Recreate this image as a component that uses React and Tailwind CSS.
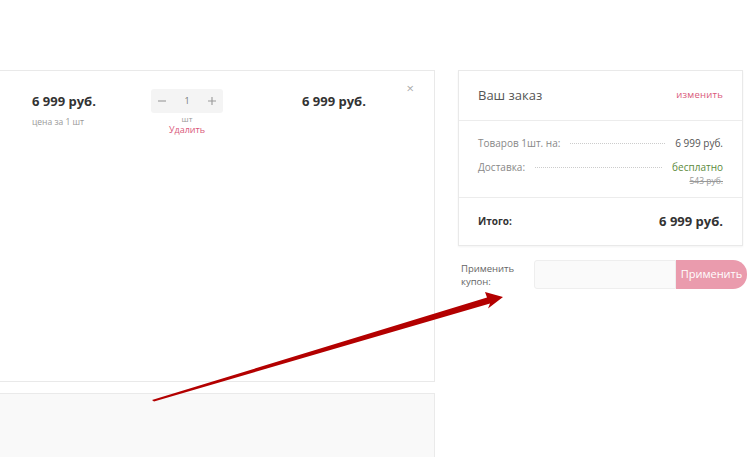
import React from "react";

export default function App() {
  return (
    <div
      className="relative w-[752px] h-[457px] overflow-hidden bg-white"
      style={{ fontFamily: '"Open Sans", "Liberation Sans", sans-serif' }}
    >
      <div className="flex pt-[70px]">
        {/* left column */}
        <div className="w-[440px] ml-[-5px] flex flex-col gap-[11px]">
          <div className="h-[312px] border border-[#e9e9e9] bg-white">
            <div className="flex pt-[18px] pl-[36px] pr-[18px]">
              <div className="w-[119px] pt-[4px]">
                <div className="text-[13px] font-bold text-[#333] leading-[16px]">6 999 руб.</div>
                <div className="text-[8.5px] text-[#999] leading-[12px] mt-[7px]">цена за 1 шт</div>
              </div>
              <div className="w-[150px] flex flex-col">
                <div className="w-[72px] h-[24px] bg-[#f4f4f4] rounded-[3px] flex items-center justify-between px-[6px] text-[#888]">
                  <svg width="10" height="10" viewBox="0 0 10 10"><path d="M1 5h8" stroke="#999" strokeWidth="1.1" /></svg>
                  <span className="text-[9px] text-[#777]">1</span>
                  <svg width="10" height="10" viewBox="0 0 10 10"><path d="M1 5h8M5 1v8" stroke="#999" strokeWidth="1.1" /></svg>
                </div>
                <div className="w-[72px] text-center text-[8px] text-[#999] leading-[10px] mt-[1px]">шт</div>
                <div className="w-[72px] text-center text-[9px] text-[#d9587a] leading-[11px]">Удалить</div>
              </div>
              <div className="pl-[1px] pt-[4px] text-[13px] font-bold text-[#333] leading-[16px]">6 999 руб.</div>
              <div className="ml-auto mr-[2px] text-[13px] text-[#aaa] leading-[10px] mt-[-6px]">×</div>
            </div>
          </div>
          <div className="h-[80px] border border-[#eaeaea] bg-[#f9f9f9]"></div>
        </div>

        {/* right column */}
        <div className="ml-[23px] w-[285px] shrink-0">
          <div className="border border-[#e9e9e9] shadow-[0_1px_2px_rgba(0,0,0,0.05)]">
            <div className="h-[50px] px-[19px] flex items-center justify-between border-b border-[#ececec]">
              <span className="text-[13px] text-[#555]">Ваш заказ</span>
              <span className="text-[9.5px] text-[#d9587a] tracking-[0.2px]">изменить</span>
            </div>
            <div className="px-[19px] pt-[13px] pb-[11px] border-b border-[#ececec]">
              <div className="flex items-center h-[18px]">
                <span className="text-[10px] text-[#888]">Товаров 1шт. на:</span>
                <span className="flex-1 mx-[10px] border-b border-dotted border-[#ccc]"></span>
                <span className="text-[10px] text-[#555]">6 999 руб.</span>
              </div>
              <div className="flex items-center h-[18px] mt-[6px]">
                <span className="text-[10px] text-[#888]">Доставка:</span>
                <span className="flex-1 mx-[10px] border-b border-dotted border-[#ccc]"></span>
                <span className="text-[10px] text-[#5c8a3c]">бесплатно</span>
              </div>
              <div className="text-right text-[8.5px] text-[#999] line-through leading-[11px] mt-[-1px]">543 руб.</div>
            </div>
            <div className="h-[47px] px-[19px] flex items-center justify-between">
              <span className="text-[10px] font-bold text-[#333]">Итого:</span>
              <span className="text-[13px] font-bold text-[#333]">6 999 руб.</span>
            </div>
          </div>

          <div className="flex items-center mt-[14px]">
            <div className="w-[76px] shrink-0 pl-[3px] text-[9.5px] leading-[13px] text-[#666]">
              Применить<br />купон:
            </div>
            <div className="flex h-[29px] shrink-0">
              <div className="w-[142px] shrink-0 h-full border border-[#eee] bg-[#fafafa] rounded-l-[3px]"></div>
              <div className="w-[71px] shrink-0 h-full bg-[#ea9bad] rounded-r-[14px] flex items-center justify-center text-[11px] text-white">
                Применить
              </div>
            </div>
          </div>
        </div>
      </div>

      {/* annotation arrow overlay */}
      <svg className="absolute left-0 top-0 pointer-events-none" width="752" height="457" viewBox="0 0 752 457">
        <polygon points="152,400 154,401.5 490,303.5 488,308.5 503,297 485,292 487,297.5" fill="#b30000" />
      </svg>
    </div>
  );
}
